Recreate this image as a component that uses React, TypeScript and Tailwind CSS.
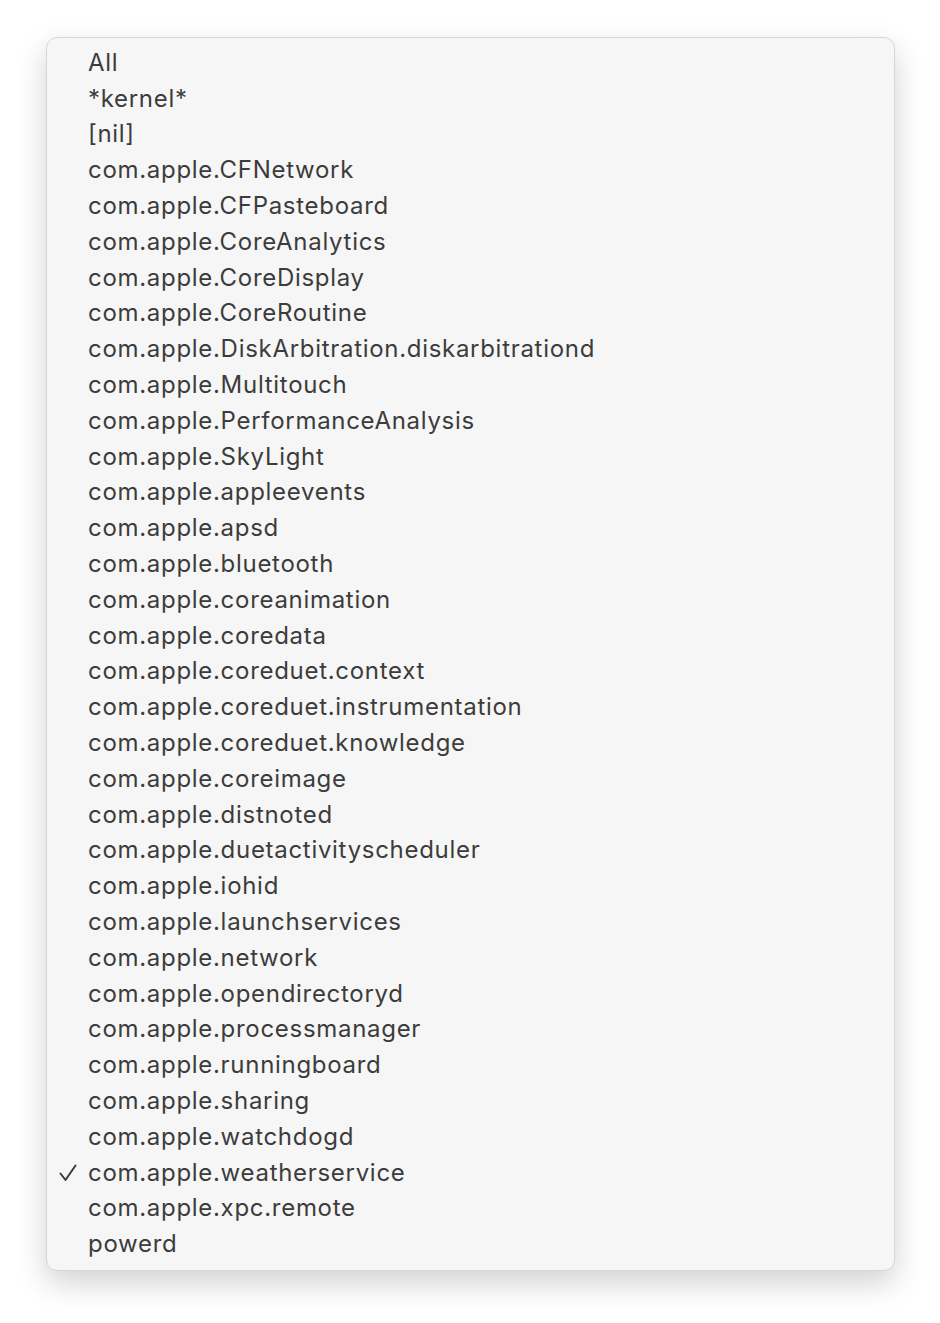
const items = [
  "All",
  "*kernel*",
  "[nil]",
  "com.apple.CFNetwork",
  "com.apple.CFPasteboard",
  "com.apple.CoreAnalytics",
  "com.apple.CoreDisplay",
  "com.apple.CoreRoutine",
  "com.apple.DiskArbitration.diskarbitrationd",
  "com.apple.Multitouch",
  "com.apple.PerformanceAnalysis",
  "com.apple.SkyLight",
  "com.apple.appleevents",
  "com.apple.apsd",
  "com.apple.bluetooth",
  "com.apple.coreanimation",
  "com.apple.coredata",
  "com.apple.coreduet.context",
  "com.apple.coreduet.instrumentation",
  "com.apple.coreduet.knowledge",
  "com.apple.coreimage",
  "com.apple.distnoted",
  "com.apple.duetactivityscheduler",
  "com.apple.iohid",
  "com.apple.launchservices",
  "com.apple.network",
  "com.apple.opendirectoryd",
  "com.apple.processmanager",
  "com.apple.runningboard",
  "com.apple.sharing",
  "com.apple.watchdogd",
  "com.apple.weatherservice",
  "com.apple.xpc.remote",
  "powerd",
];

const selected = "com.apple.weatherservice";

export default function App() {
  return (
    <div className="min-h-[1323px] w-[940px] bg-white pt-[37px] pl-[46px]">
      <div className="w-[849px] rounded-[11px] border border-[#d6d6d6] bg-[#f6f6f6] pt-[7px] pb-[8px] shadow-[0_12px_30px_rgba(0,0,0,0.18)]">
        <ul className="font-['Inter','Liberation_Sans',sans-serif] text-[24px] text-[#3c3c3c]">
          {items.map((name) => (
            <li key={name} className="flex h-[35.8px] items-center">
              <span className="flex w-[41px] justify-end pr-[10px]">
                {name === selected && (
                  <svg width="20" height="20" viewBox="0 0 20 20" fill="none">
                    <path
                      d="M2.5 10.5 L7.5 17 L17.5 2.5"
                      stroke="#3c3c3c"
                      strokeWidth="2"
                      strokeLinecap="round"
                      strokeLinejoin="round"
                    />
                  </svg>
                )}
              </span>
              <span className="leading-none tracking-[0.7px]">{name}</span>
            </li>
          ))}
        </ul>
      </div>
    </div>
  );
}
